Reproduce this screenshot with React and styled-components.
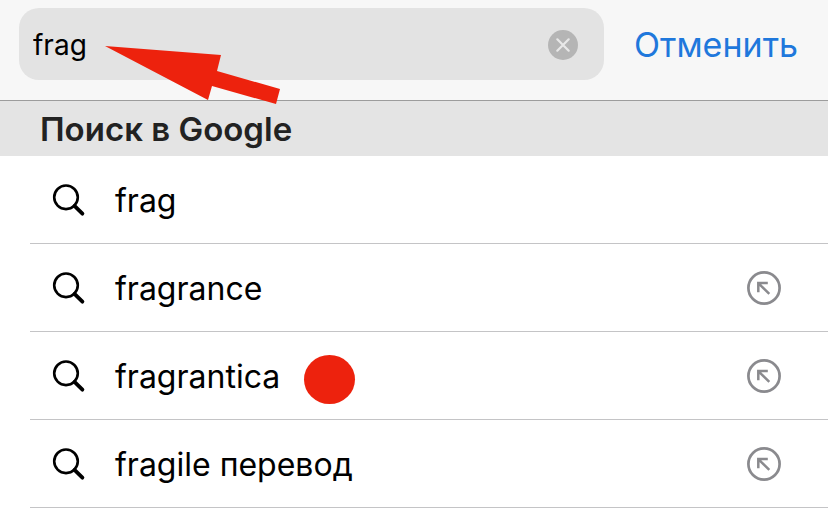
import React, { useState } from 'react';
import styled, { createGlobalStyle } from 'styled-components';

const GlobalStyle = createGlobalStyle`
    * {
        box-sizing: border-box;
    }

    body {
        margin: 0;
        background: #ffffff;
        color: #000000;
        font-family: Inter, "Liberation Sans", sans-serif;
    }

    button,
    input {
        margin: 0;
        padding: 0;
        border: 0;
        background: none;
        color: inherit;
        font: inherit;
    }

    button {
        cursor: pointer;
    }

    svg {
        display: block;
    }
`;

const Toolbar = styled.header`
    position: relative;
    display: flex;
    align-items: center;
    gap: 30px;
    padding: 8px 30px 20px 19px;
    background: #f7f7f7;
    border-bottom: 1px solid #9c9c9c;
`;

const SearchField = styled.div`
    flex: 1;
    min-width: 0;
    height: 72px;
    display: flex;
    align-items: center;
    padding: 2px 26px 0 14px;
    background: #e3e3e3;
    border-radius: 20px;
`;

const SearchInput = styled.input`
    flex: 1;
    min-width: 0;
    height: 40px;
    font-size: 28px;
    outline: none;
`;

const CancelButton = styled.button`
    padding-top: 2px;
    color: #1f78dc;
    font-size: 34px;
    line-height: 40px;
`;

const PointerArrow = styled.svg`
    position: absolute;
    left: 105px;
    top: 46px;
    z-index: 1;
    pointer-events: none;
`;

const SectionTitle = styled.h2`
    margin: 0;
    padding: 8px 40px 7px;
    background: #e4e4e4;
    color: #222222;
    font-size: 33px;
    font-weight: 600;
    line-height: 40px;
`;

const List = styled.ul`
    margin: 0;
    padding: 0 0 0 30px;
    list-style: none;
`;

const Row = styled.li`
    display: flex;
    align-items: center;
    height: 88px;
    padding-right: 47px;
    border-bottom: 1px solid #c4c4c6;
`;

const Suggestion = styled.button`
    flex: 1;
    display: flex;
    align-items: center;
    gap: 29px;
    padding-left: 22px;
    font-size: 32px;
    line-height: 40px;
    text-align: left;
`;

const Label = styled.span`
    position: relative;
    padding-top: 2px;
`;

const Marker = styled.span`
    position: absolute;
    left: calc(100% + 24px);
    top: 0;
    width: 51px;
    height: 49px;
    border-radius: 50%;
    background: #ed220d;
`;

const SearchIcon = () => (
    <svg width="34" height="34" viewBox="0 0 34 34" fill="none" stroke="#000000" aria-hidden="true">
        <circle cx="14" cy="14.3" r="11.8" strokeWidth="2.6" />
        <path d="M22.5 22.8L30.4 30.7" strokeWidth="3.8" strokeLinecap="round" />
    </svg>
);

const FillIcon = () => (
    <svg width="34" height="34" viewBox="0 0 34 34" fill="none" stroke="#8a8a8e" aria-hidden="true">
        <circle cx="17" cy="17" r="15.6" strokeWidth="2.7" />
        <path d="M11.3 21.2V12.1H20.8M11.6 12.4L22.3 22.9" strokeWidth="2.5" />
    </svg>
);

const ClearIcon = () => (
    <svg width="30" height="30" viewBox="0 0 30 30" aria-hidden="true">
        <circle cx="15" cy="15" r="15" fill="#b5b5b5" />
        <path d="M9.3 9.3L20.7 20.7M20.7 9.3L9.3 20.7" stroke="#e8e8e8" strokeWidth="2.2" strokeLinecap="round" />
    </svg>
);

const suggestions = [
    { text: 'frag' },
    { text: 'fragrance', canFill: true },
    { text: 'fragrantica', canFill: true, marked: true },
    { text: 'fragile перевод', canFill: true },
];

const App = () => {
    const [query, setQuery] = useState('frag');

    return (
        <>
            <GlobalStyle />
            <Toolbar>
                <SearchField>
                    <SearchInput
                        type="text"
                        aria-label="Поиск"
                        value={query}
                        onChange={(e) => setQuery(e.target.value)}
                    />
                    <button type="button" aria-label="Очистить" onClick={() => setQuery('')}>
                        <ClearIcon />
                    </button>
                </SearchField>
                <CancelButton type="button">Отменить</CancelButton>
                <PointerArrow width="175" height="58" viewBox="0 0 175 58" aria-hidden="true">
                    <path d="M0 0L116 9L112 25L175 43L171 58L107 40L103 54Z" fill="#ed220d" />
                </PointerArrow>
            </Toolbar>
            <main>
                <SectionTitle>Поиск в Google</SectionTitle>
                <List>
                    {suggestions.map(({ text, canFill, marked }) => (
                        <Row key={text}>
                            <Suggestion type="button">
                                <SearchIcon />
                                <Label>
                                    {text}
                                    {marked && <Marker />}
                                </Label>
                            </Suggestion>
                            {canFill &&
                                <button type="button" aria-label={`Вставить ${text}`} onClick={() => setQuery(text)}>
                                    <FillIcon />
                                </button>
                            }
                        </Row>
                    ))}
                </List>
            </main>
        </>
    );
};

export default App;
